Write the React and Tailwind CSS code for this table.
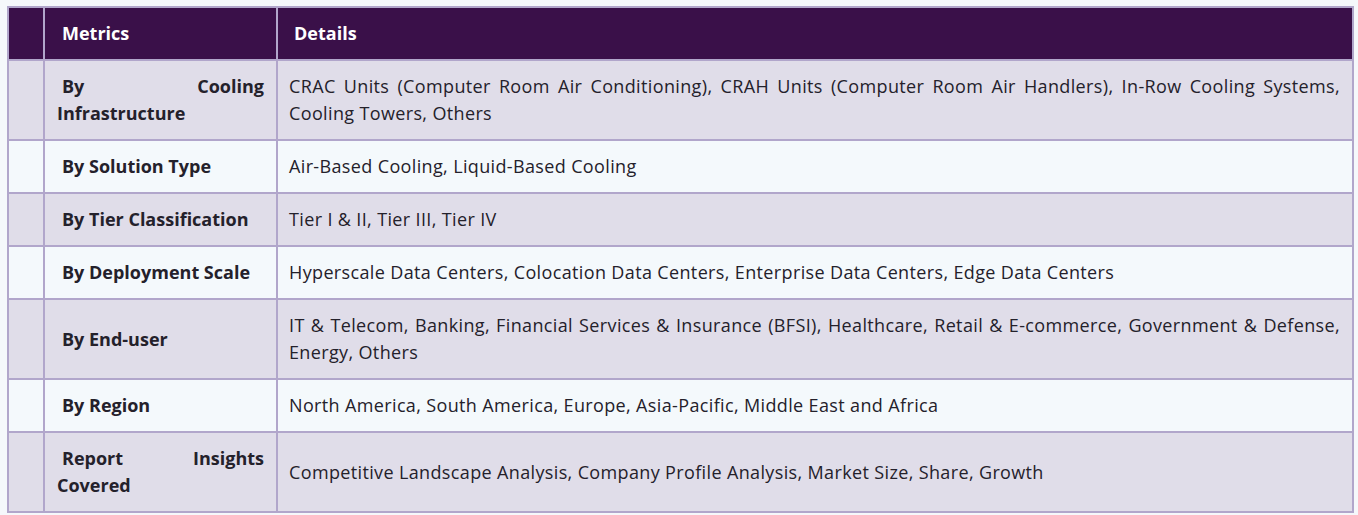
import React from 'react';

const rows = [
  {
    metric: 'By Cooling Infrastructure',
    details:
      'CRAC Units (Computer Room Air Conditioning), CRAH Units (Computer Room Air Handlers), In-Row Cooling Systems, Cooling Towers, Others',
  },
  { metric: 'By Solution Type', details: 'Air-Based Cooling, Liquid-Based Cooling' },
  { metric: 'By Tier Classification', details: 'Tier I & II, Tier III, Tier IV' },
  {
    metric: 'By Deployment Scale',
    details: 'Hyperscale Data Centers, Colocation Data Centers, Enterprise Data Centers, Edge Data Centers',
  },
  {
    metric: 'By End-user',
    details:
      'IT & Telecom, Banking, Financial Services & Insurance (BFSI), Healthcare, Retail & E-commerce, Government & Defense, Energy, Others',
  },
  { metric: 'By Region', details: 'North America, South America, Europe, Asia-Pacific, Middle East and Africa' },
  {
    metric: 'Report Insights Covered',
    details: 'Competitive Landscape Analysis, Company Profile Analysis, Market Size, Share, Growth',
  },
];

const App = () => {
  return (
    <div className="min-h-[515px] bg-[#f5f8fb] pt-[6px] pl-[7px] font-['Open_Sans',sans-serif] text-[18px] tracking-[0.36px] leading-[27px] text-[#24212b]">
      <table className="w-[1347px] border-collapse border-2 border-[#b1a6cb]">
        <thead>
          <tr className="bg-[#3a1049] text-white">
            <th className="w-[36px] border-2 border-[#b1a6cb]"></th>
            <th className="w-[233px] border-2 border-[#b1a6cb] px-3 py-[12px] text-left font-bold tracking-normal indent-[5px]">Metrics</th>
            <th className="border-2 border-[#b1a6cb] pl-[11px] pr-3 py-[12px] text-left font-bold tracking-normal indent-[5px]">Details</th>
          </tr>
        </thead>
        <tbody>
          {rows.map((row, i) => (
            <tr key={i} className={i % 2 === 0 ? 'bg-[#e0dde9]' : 'bg-[#f4f9fc]'}>
              <td className="border-2 border-[#b1a6cb]"></td>
              <td className="border-2 border-[#b1a6cb] px-3 py-3 text-justify font-bold tracking-normal indent-[5px]">{row.metric}</td>
              <td className="border-2 border-[#b1a6cb] pl-[11px] pr-3 py-3 text-justify">{row.details}</td>
            </tr>
          ))}
        </tbody>
      </table>
    </div>
  );
};

export default App;
